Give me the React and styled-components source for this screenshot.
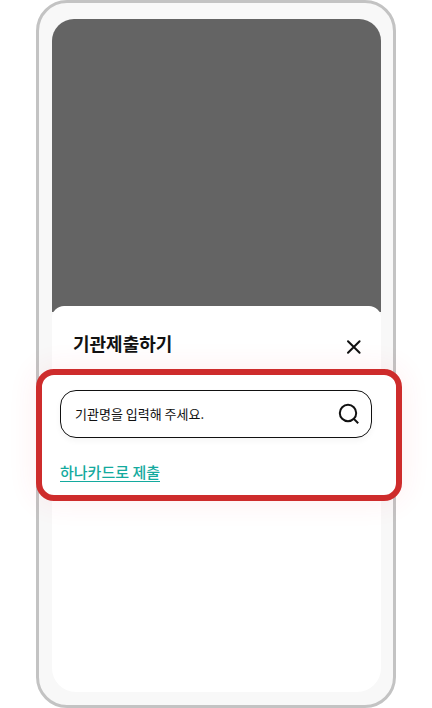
import React from "react";
import styled, { createGlobalStyle } from "styled-components";

const GlobalStyle = createGlobalStyle`
  *, *::before, *::after { box-sizing: border-box; }
  body {
    margin: 0;
    background: #fff;
    color: #111;
    font-family: "Noto Sans CJK KR", "Noto Sans", sans-serif;
  }
  button, input { font: inherit; color: inherit; }
`;

const Stage = styled.main`
  display: flex;
  justify-content: center;
  padding: 0 36px;
`;

const Phone = styled.div`
  flex: 1;
  max-width: 480px;
  padding: 16px 12px 13px 13px;
  border: 3px solid #c3c3c3;
  border-radius: 31px;
  background: #f8f8f8;
`;

const Backdrop = styled.div`
  height: 293px;
  border-radius: 22px 22px 0 0;
  background: #646464;
`;

const Sheet = styled.section`
  min-height: 386px;
  margin-top: -6px;
  border-radius: 12px 12px 24px 24px;
  background: #fff;
`;

const SheetHeader = styled.header`
  display: flex;
  align-items: flex-start;
  justify-content: space-between;
  height: 63px;
  padding: 25px 17px 0 21px;
`;

const Title = styled.h1`
  margin: 0;
  font-size: 18px;
  font-weight: 700;
  line-height: 24px;
`;

const IconButton = styled.button`
  display: flex;
  flex: none;
  padding: 0;
  border: 0;
  background: none;
  cursor: pointer;
`;

const CloseButton = styled(IconButton)`
  padding-top: 6px;
`;

const Highlight = styled.div`
  margin: 0 -21px 0 -16px;
  padding: 15px 24px 12px 18px;
  border: 6px solid #ce2c2c;
  border-radius: 18px;
  background: #fff;
  box-shadow: 0 0 30px rgba(255, 50, 80, 0.09);
`;

const SearchBox = styled.form`
  display: flex;
  align-items: center;
  height: 48px;
  padding: 0 10px 0 14px;
  border: 1px solid #111;
  border-radius: 16px;
  box-shadow: 0 3px 6px rgba(0, 0, 0, 0.04);
`;

const SearchInput = styled.input`
  flex: 1;
  min-width: 0;
  height: 24px;
  padding: 0 0 2px;
  border: 0;
  outline: 0;
  background: none;
  font-size: 13px;
  line-height: 22px;
  &::placeholder { color: #111; opacity: 1; }
`;

const SubmitLink = styled.a`
  display: inline-block;
  margin-top: 25px;
  border-bottom: 1px solid #14aa9e;
  color: #14aa9e;
  font-size: 15px;
  font-weight: 500;
  line-height: 18px;
  text-decoration: none;
`;

function CloseIcon() {
  return (
    <svg width="20" height="20" viewBox="0 0 20 20" fill="none" stroke="#111" strokeWidth="2" strokeLinecap="round" aria-hidden="true">
      <path d="M4 4.2l11.6 11.6M15.6 4.2L4 15.8" />
    </svg>
  );
}

function SearchIcon() {
  return (
    <svg width="24" height="24" viewBox="0 0 24 24" fill="none" stroke="#111" strokeWidth="2" aria-hidden="true">
      <circle cx="11" cy="11" r="8.2" />
      <path d="M16.6 16.6L21.2 21.2" />
    </svg>
  );
}

export default function App() {
  return (
    <>
      <GlobalStyle />
      <Stage>
        <Phone>
          <Backdrop />
          <Sheet aria-labelledby="sheet-title">
            <SheetHeader>
              <Title id="sheet-title">기관제출하기</Title>
              <CloseButton type="button" aria-label="닫기">
                <CloseIcon />
              </CloseButton>
            </SheetHeader>
            <Highlight>
              <SearchBox role="search" onSubmit={(event) => event.preventDefault()}>
                <SearchInput type="text" aria-label="기관명" placeholder="기관명을 입력해 주세요." />
                <IconButton type="submit" aria-label="검색">
                  <SearchIcon />
                </IconButton>
              </SearchBox>
              <SubmitLink href="#submit">하나카드로 제출</SubmitLink>
            </Highlight>
          </Sheet>
        </Phone>
      </Stage>
    </>
  );
}
